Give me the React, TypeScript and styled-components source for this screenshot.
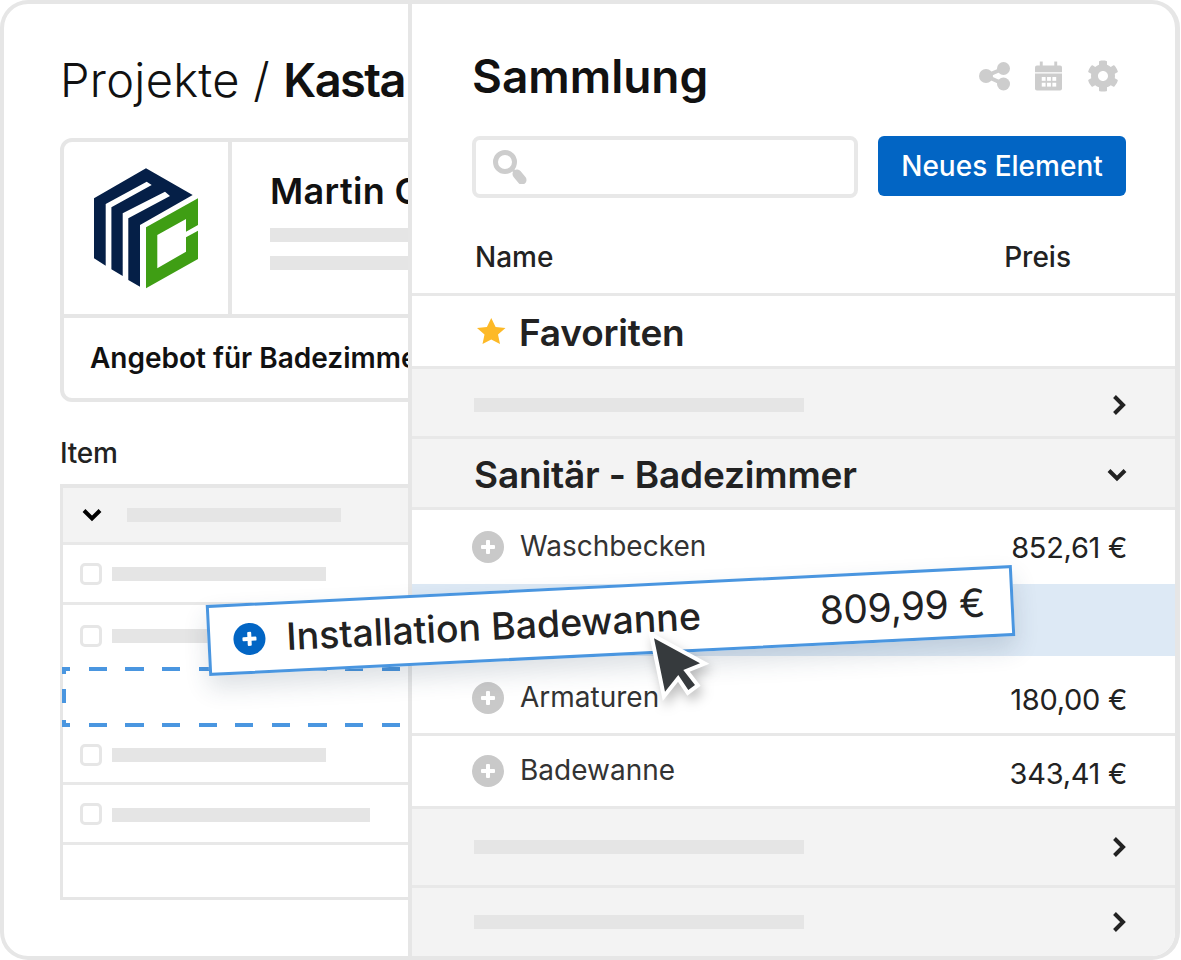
import styled, { createGlobalStyle } from "styled-components";
import { FaCog } from "react-icons/fa";

const GlobalStyle = createGlobalStyle`
  body {
    margin: 0;
    background: #fff;
    font-family: "Inter", "Liberation Sans", sans-serif;
  }
`;

const Frame = styled.div`
  position: relative;
  box-sizing: border-box;
  display: flex;
  width: 1180px;
  height: 960px;
  background: #fff;
  border: 4px solid #e6e6e6;
  border-right-width: 5px;
  border-radius: 28px;
  overflow: hidden;
`;

/* left side */
const ProjectPane = styled.section`
  box-sizing: border-box;
  width: 404px;
  flex: none;
  padding: 48px 0 0 56px;
  overflow: hidden;
`;

const PageTitle = styled.h1`
  margin: 0;
  height: 56px;
  font-size: 47px;
  line-height: 56px;
  font-weight: 300;
  letter-spacing: 0.006em;
  color: #111;
  white-space: nowrap;

  b {
    font-weight: 600;
    letter-spacing: -0.035em;
  }
`;

const ProjectCard = styled.div`
  box-sizing: border-box;
  display: flex;
  flex-direction: column;
  width: 380px;
  height: 264px;
  margin-top: 30px;
  border: 4px solid #e6e6e6;
  border-radius: 12px;
  overflow: hidden;
`;

const CardTop = styled.div`
  display: flex;
  height: 172px;
  border-bottom: 4px solid #e6e6e6;
`;

const LogoCell = styled.div`
  display: flex;
  align-items: center;
  justify-content: center;
  width: 164px;
  border-right: 4px solid #e6e6e6;
`;

const ClientCell = styled.div`
  display: flex;
  flex-direction: column;
  flex: 1;
  padding: 26px 0 0 38px;
  overflow: hidden;
`;

const ClientName = styled.div`
  height: 48px;
  font-size: 36px;
  line-height: 46px;
  font-weight: 600;
  letter-spacing: 0.01em;
  color: #111;
  white-space: nowrap;
`;

const Bar = styled.div<{ $width: number; $nudge?: number; $inset?: number }>`
  flex: none;
  width: ${(p) => p.$width}px;
  height: 14px;
  margin-top: ${(p) => p.$nudge ?? 0}px;
  margin-left: ${(p) => p.$inset ?? 0}px;
  background: #e5e5e5;
`;

const ClientBars = styled.div`
  display: flex;
  flex-direction: column;
  gap: 14px;
  margin-top: 12px;
`;

const OfferTitle = styled.div`
  padding-left: 26px;
  font-size: 28px;
  line-height: 80px;
  font-weight: 600;
  color: #111;
  white-space: nowrap;
`;

const ItemLabel = styled.div`
  margin-top: 34px;
  height: 34px;
  font-size: 28px;
  line-height: 34px;
  font-weight: 500;
  letter-spacing: -0.01em;
  color: #222;
`;

const ItemTable = styled.div`
  box-sizing: border-box;
  height: 416px;
  margin-top: 14px;
  border: solid #e6e6e6;
  border-width: 4px 0 3px 3px;
`;

const ItemHead = styled.div`
  box-sizing: border-box;
  display: flex;
  align-items: center;
  gap: 25px;
  height: 57px;
  padding-left: 19px;
  background: #f3f3f3;
  border-bottom: 3px solid #e8e8e8;
`;

const ItemRow = styled.div<{ $height: number; $plain?: boolean }>`
  box-sizing: border-box;
  display: flex;
  align-items: center;
  gap: 10px;
  height: ${(p) => p.$height}px;
  padding-left: 17px;
  border-bottom: ${(p) => (p.$plain ? "none" : "3px solid #e8e8e8")};
`;

const Check = styled.span`
  box-sizing: border-box;
  flex: none;
  width: 22px;
  height: 22px;
  border: 3px solid #e6e6e6;
  border-radius: 5px;
`;

const DropSlot = styled.div`
  width: 338px;
  height: 60px;
  margin-left: -1px;
  background:
    repeating-linear-gradient(90deg, #4a96e0 0 18.3px, transparent 18.3px 36.6px) -9.9px 0 / 348px 4px no-repeat,
    repeating-linear-gradient(90deg, #4a96e0 0 18.3px, transparent 18.3px 36.6px) -9.9px 100% / 348px 4px no-repeat,
    linear-gradient(#4a96e0 0 12%, transparent 12% 37%, #4a96e0 37% 60%, transparent 60% 88%, #4a96e0 88%) 0 0 / 4px 100% no-repeat;
`;

/* right side */
const CollectionPane = styled.section`
  flex: 1;
  min-width: 0;
  border-left: 4px solid #e6e6e6;
  display: flex;
  flex-direction: column;
`;

const CollectionHead = styled.div`
  padding: 44px 49px 0 60px;
`;

const TitleRow = styled.div`
  display: flex;
  align-items: center;
  justify-content: space-between;
  height: 56px;
`;

const CollectionTitle = styled.h2`
  margin: 0;
  font-size: 46px;
  line-height: 56px;
  font-weight: 600;
  color: #111;
`;

const IconTools = styled.div`
  display: flex;
  align-items: center;
  gap: 25px;
  margin-right: 7px;
  color: #cdcdcd;
`;

const SearchRow = styled.div`
  display: flex;
  gap: 20px;
  margin-top: 32px;
`;

const SearchBox = styled.div`
  box-sizing: border-box;
  display: flex;
  align-items: center;
  width: 386px;
  height: 62px;
  padding-left: 16px;
  border: 4px solid #e8e8e8;
  border-radius: 8px;
`;

const NewButton = styled.button`
  width: 248px;
  height: 60px;
  border: 0;
  border-radius: 6px;
  background: #0265c4;
  color: #fff;
  font-family: inherit;
  font-size: 28px;
  font-weight: 500;
`;

const Columns = styled.div`
  box-sizing: border-box;
  display: flex;
  align-items: center;
  justify-content: space-between;
  height: 98px;
  padding: 22px 104px 0 63px;
  border-bottom: 3px solid #e8e8e8;
  font-size: 28px;
  font-weight: 500;
  color: #222;
`;

const Row = styled.div<{ $height: number; $tone?: string; $plain?: boolean; $pad?: number }>`
  box-sizing: border-box;
  display: flex;
  align-items: center;
  justify-content: space-between;
  height: ${(p) => p.$height}px;
  padding: ${(p) => p.$pad ?? 0}px 48px 0 60px;
  background: ${(p) => p.$tone ?? "#fff"};
  border-bottom: ${(p) => (p.$plain ? "none" : "3px solid #e8e8e8")};
`;

const GroupName = styled.div`
  display: flex;
  align-items: center;
  gap: 13px;
  padding-left: 2px;
  font-size: 37px;
  font-weight: 600;
  letter-spacing: -0.005em;
  color: #222;

  svg {
    margin: -3px 0 0 3px;
  }
`;

const Entry = styled.div`
  display: flex;
  align-items: center;
  gap: 16px;
  font-size: 28px;
  color: #333;

  span:last-child {
    transform: translateY(-1px);
  }
`;

const Price = styled.span<{ $shift?: number }>`
  font-size: 29px;
  letter-spacing: -0.01em;
  color: #222;
  transform: translateY(${(p) => p.$shift ?? 0}px);
`;

const Plus = styled.span<{ $active?: boolean }>`
  position: relative;
  flex: none;
  display: block;
  width: 32px;
  height: 32px;
  border-radius: 50%;
  background: ${(p) => (p.$active ? "#0265c4" : "#c9c9c9")};

  &::before,
  &::after {
    content: "";
    position: absolute;
    left: 9px;
    top: 14px;
    width: 14px;
    height: 4px;
    border-radius: 1px;
    background: #fff;
  }

  &::after {
    transform: rotate(90deg);
  }
`;

/* dragged item and pointer lie over both panes */
const DragCard = styled.div`
  position: absolute;
  left: 203px;
  top: 581px;
  box-sizing: border-box;
  display: flex;
  align-items: center;
  width: 807px;
  height: 71px;
  padding: 0 26px 0 23px;
  background: #fff;
  border: 3px solid #4a96e0;
  transform: rotate(-2.84deg);
  box-shadow: 0 12px 24px rgba(40, 60, 90, 0.16);
`;

const DragName = styled.span`
  margin-left: 21px;
  font-size: 37.5px;
  font-weight: 500;
  color: #222;
  white-space: nowrap;
`;

const DragPrice = styled.span`
  margin-left: auto;
  font-size: 39px;
  font-weight: 400;
  letter-spacing: -0.01em;
  color: #222;
`;

const Pointer = styled.svg`
  position: absolute;
  left: 636px;
  top: 621px;
  filter: drop-shadow(3px 6px 6px rgba(0, 0, 0, 0.25));
`;

const Logo = () => (
  <svg width="105" height="121" viewBox="94 168 105 121">
    <path
      fill="#051f47"
      d="M146 168.3 94 198.3V258.3L105.7 265.7V204L146.7 181.7 151.7 185 111.4 207.3V269.3L122.7 276V213.3L165 191.7 170 196 128.3 218.3V280L140 286.7V225L192.7 195Z"
    />
    <path
      fill="#3f9e14"
      d="M146 227.3 198 198.3V225L186 231.7V219L157.3 235V268.3L186 251.7V237.3L198 230.7V259L146 288.3Z"
    />
  </svg>
);

const StarIcon = () => (
  <svg width="29" height="26" viewBox="0 0 29 26" fill="#fdb927">
    <path d="M14.25 0 18.6 8.9 28.5 10 21 16.6 23 26 14.25 21.4 5.5 26 7.5 16.6 0 10 9.9 8.9Z" />
  </svg>
);

const ShareIcon = () => (
  <svg width="31" height="30" viewBox="0 0 31 30" fill="currentColor">
    <circle cx="7" cy="15" r="7" />
    <circle cx="24.5" cy="7.5" r="6.5" />
    <circle cx="24.5" cy="23" r="6.5" />
    <path d="M7 15 24.5 7.5M7 15 24.5 23" stroke="currentColor" strokeWidth="4" />
  </svg>
);

const CalendarIcon = () => (
  <svg width="27" height="30" viewBox="0 0 28 30" fill="currentColor">
    <rect x="5" y="0" width="3" height="6" />
    <rect x="20" y="0" width="3" height="6" />
    <path d="M2 4H26A2 2 0 0 1 28 6V11H0V6A2 2 0 0 1 2 4Z" />
    <path d="M0 12.5H28V28A2 2 0 0 1 26 30H2A2 2 0 0 1 0 28Z" />
    <g fill="#fff">
      <rect x="7" y="16" width="4" height="4" />
      <rect x="12.5" y="16" width="4" height="4" />
      <rect x="18" y="16" width="4" height="4" />
      <rect x="7" y="22" width="4" height="4" />
      <rect x="12.5" y="22" width="4" height="4" />
      <rect x="18" y="22" width="4" height="4" />
    </g>
  </svg>
);

const SearchIcon = () => (
  <svg width="36" height="34" viewBox="0 0 36 34">
    <circle cx="13" cy="12" r="9.5" fill="none" stroke="#cdcdcd" strokeWidth="5" />
    <path d="M20 19 23 22" stroke="#cdcdcd" strokeWidth="3" />
    <path d="M25 24 30 30" stroke="#cdcdcd" strokeWidth="9" strokeLinecap="round" />
  </svg>
);

const ChevronRight = () => (
  <svg width="16" height="22" viewBox="0 0 16 22" fill="none" stroke="#222" strokeWidth="4">
    <path d="M3.5 2.5 12 11 3.5 19.5" />
  </svg>
);

const ChevronDown = ({ color = "#222" }: { color?: string }) => (
  <svg width="20" height="14" viewBox="0 0 20 14" fill="none" stroke={color} strokeWidth="4">
    <path d="M2 2.5 10 10.5 18 2.5" />
  </svg>
);

const App = () => (
  <>
    <GlobalStyle />
    <Frame>
      <ProjectPane>
        <PageTitle>
          Projekte / <b>Kasta</b>
        </PageTitle>
        <ProjectCard>
          <CardTop>
            <LogoCell>
              <Logo />
            </LogoCell>
            <ClientCell>
              <ClientName>Martin C</ClientName>
              <ClientBars>
                <Bar $width={200} />
                <Bar $width={200} />
              </ClientBars>
            </ClientCell>
          </CardTop>
          <OfferTitle>Angebot für Badezimmer</OfferTitle>
        </ProjectCard>
        <ItemLabel>Item</ItemLabel>
        <ItemTable>
          <ItemHead>
            <ChevronDown color="#000" />
            <Bar $width={214} />
          </ItemHead>
          <ItemRow $height={60}>
            <Check />
            <Bar $width={214} />
          </ItemRow>
          <ItemRow $height={62} $plain>
            <Check />
            <Bar $width={214} />
          </ItemRow>
          <DropSlot />
          <ItemRow $height={58}>
            <Check />
            <Bar $width={214} />
          </ItemRow>
          <ItemRow $height={60}>
            <Check />
            <Bar $width={258} $nudge={3} />
          </ItemRow>
        </ItemTable>
      </ProjectPane>

      <CollectionPane>
        <CollectionHead>
          <TitleRow>
            <CollectionTitle>Sammlung</CollectionTitle>
            <IconTools>
              <ShareIcon />
              <CalendarIcon />
              <FaCog size={32} />
            </IconTools>
          </TitleRow>
          <SearchRow>
            <SearchBox>
              <SearchIcon />
            </SearchBox>
            <NewButton>Neues Element</NewButton>
          </SearchRow>
        </CollectionHead>
        <Columns>
          <span>Name</span>
          <span>Preis</span>
        </Columns>
        <Row $height={73} $pad={3}>
          <GroupName>
            <StarIcon />
            Favoriten
          </GroupName>
        </Row>
        <Row $height={70} $tone="#f3f3f3" $pad={4}>
          <Bar $width={330} $inset={2} />
          <ChevronRight />
        </Row>
        <Row $height={71} $tone="#f3f3f3" $pad={3}>
          <GroupName>Sanitär - Badezimmer</GroupName>
          <ChevronDown />
        </Row>
        <Row $height={74} $plain>
          <Entry>
            <Plus />
            <span>Waschbecken</span>
          </Entry>
          <Price>852,61 €</Price>
        </Row>
        <Row $height={72} $tone="#dde9f5" $plain />
        <Row $height={80} $pad={6}>
          <Entry>
            <Plus />
            <span>Armaturen</span>
          </Entry>
          <Price $shift={2}>180,00 €</Price>
        </Row>
        <Row $height={73}>
          <Entry>
            <Plus />
            <span>Badewanne</span>
          </Entry>
          <Price $shift={2}>343,41 €</Price>
        </Row>
        <Row $height={79} $tone="#f3f3f3">
          <Bar $width={330} $inset={2} />
          <ChevronRight />
        </Row>
        <Row $height={68} $tone="#f3f3f3" $plain>
          <Bar $width={330} $inset={2} />
          <ChevronRight />
        </Row>
      </CollectionPane>

      <DragCard>
        <Plus $active />
        <DragName>Installation Badewanne</DragName>
        <DragPrice>809,99 €</DragPrice>
      </DragCard>
      <Pointer width="80" height="90" viewBox="0 0 80 90">
        <polygon
          points="14,13.3 60,38.3 43.3,45 55,60 48.3,65 38.3,50 25,66.7"
          fill="#363a3d"
          stroke="#fff"
          strokeWidth="8"
          strokeLinejoin="miter"
          paintOrder="stroke"
        />
      </Pointer>
    </Frame>
  </>
);

export default App;
